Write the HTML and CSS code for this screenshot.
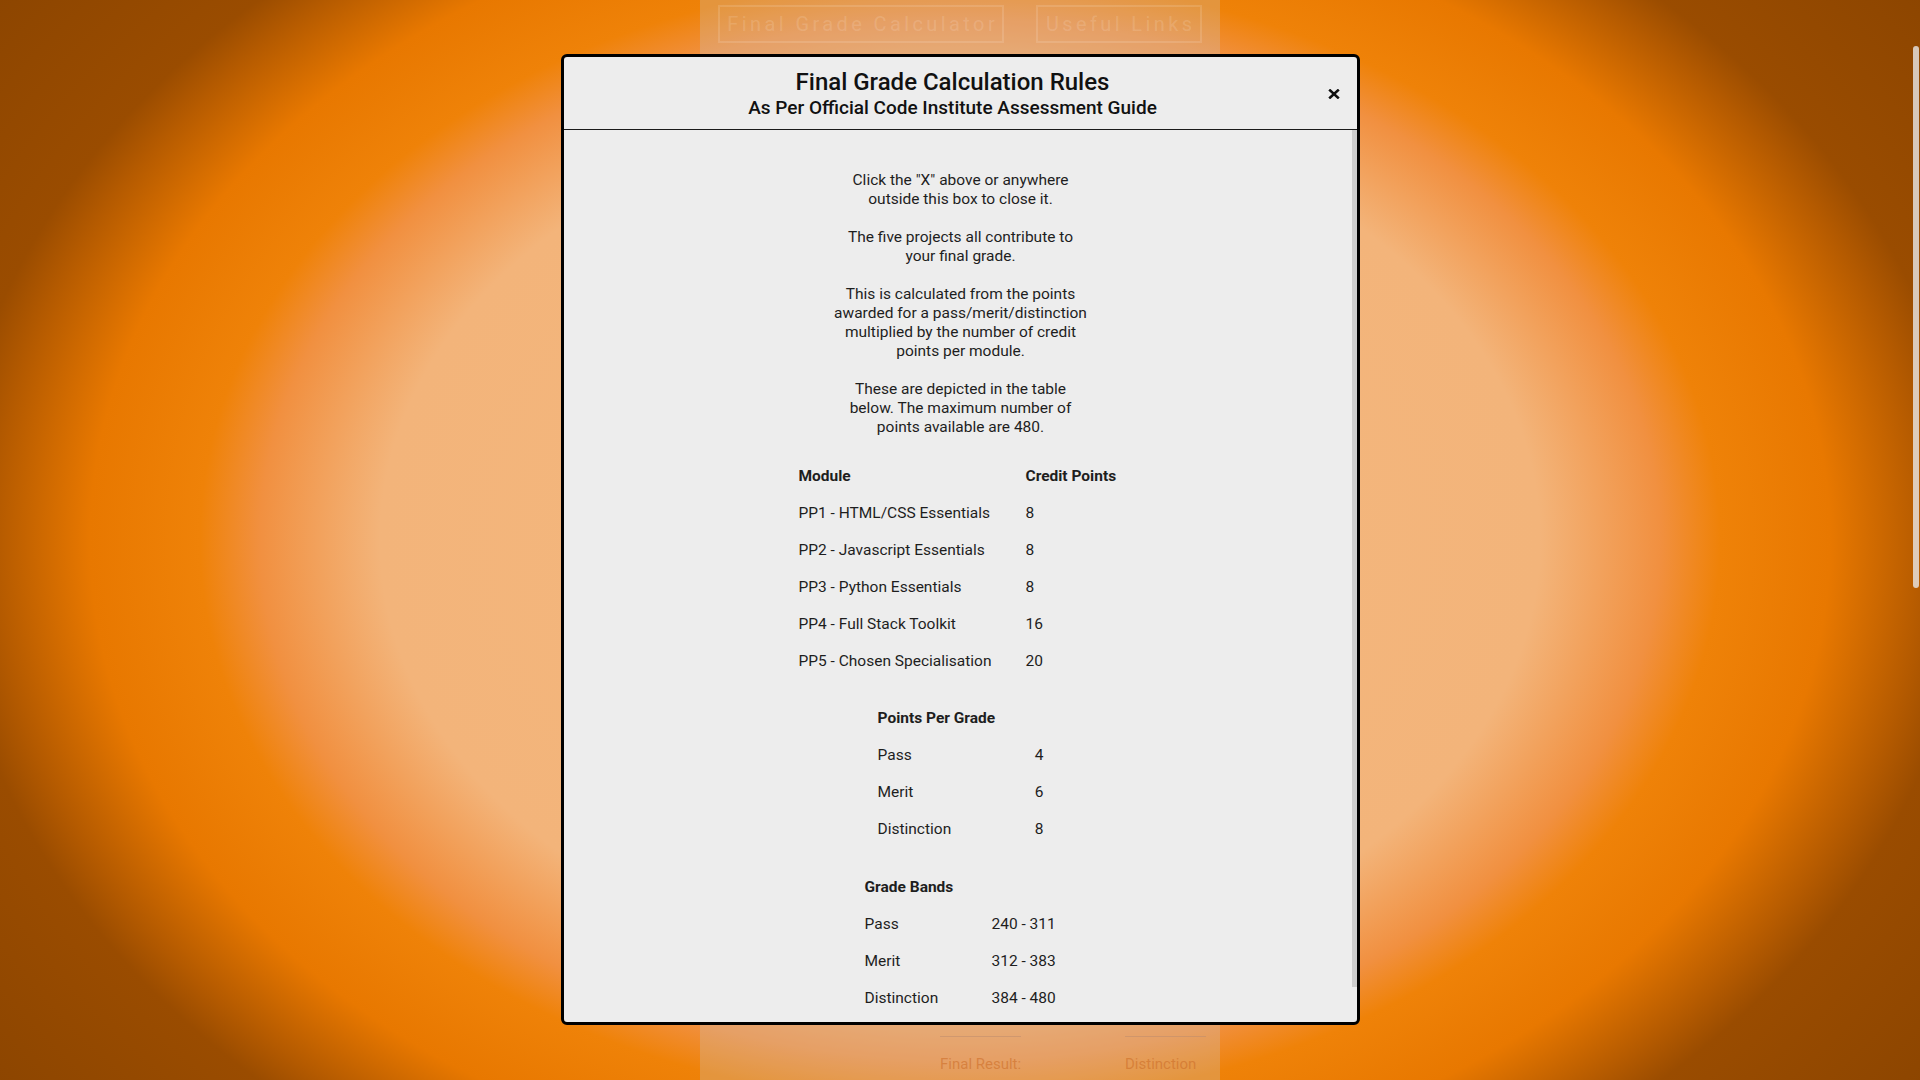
FILE: index.html
```html
<!DOCTYPE html>
<html lang="en">
<head>
<meta charset="utf-8">
<title>Final Grade Calculator</title>
<link rel="stylesheet" href="styles.css">
</head>
<body>
<div class="page">
  <div class="column">
    <nav class="nav">
      <a class="nav-btn nav-btn-wide">Final Grade Calculator</a>
      <a class="nav-btn nav-btn-narrow">Useful Links</a>
    </nav>
    <main class="calc"></main>
    <div class="result">
      <div class="result-cell">Final Result:</div>
      <div class="result-cell">Distinction</div>
    </div>
  </div>
</div>

<div class="modal">
  <header class="modal-header">
    <h1 class="modal-title">Final Grade Calculation Rules</h1>
    <h2 class="modal-subtitle">As Per Official Code Institute Assessment Guide</h2>
    <span class="modal-close" aria-label="close">
      <svg width="12" height="10" viewBox="0 0 12 10"><path d="M1.2 0.6 L10.8 9.4 M10.8 0.6 L1.2 9.4" stroke="#111" stroke-width="2.6" fill="none"/></svg>
    </span>
  </header>
  <div class="modal-body">
    <p>Click the "X" above or anywhere<br>outside this box to close it.</p>
    <p>The five projects all contribute to<br>your final grade.</p>
    <p>This is calculated from the points<br>awarded for a pass/merit/distinction<br>multiplied by the number of credit<br>points per module.</p>
    <p>These are depicted in the table<br>below. The maximum number of<br>points available are 480.</p>

    <table class="rules rules-module">
      <tr><th class="c1">Module</th><th>Credit Points</th></tr>
      <tr><td class="c1">PP1 - HTML/CSS Essentials</td><td>8</td></tr>
      <tr><td class="c1">PP2 - Javascript Essentials</td><td>8</td></tr>
      <tr><td class="c1">PP3 - Python Essentials</td><td>8</td></tr>
      <tr><td class="c1">PP4 - Full Stack Toolkit</td><td>16</td></tr>
      <tr><td class="c1">PP5 - Chosen Specialisation</td><td>20</td></tr>
    </table>

    <table class="rules rules-points">
      <tr><th colspan="2">Points Per Grade</th></tr>
      <tr><td class="c1">Pass</td><td>4</td></tr>
      <tr><td class="c1">Merit</td><td>6</td></tr>
      <tr><td class="c1">Distinction</td><td>8</td></tr>
    </table>

    <table class="rules rules-bands">
      <tr><th colspan="2">Grade Bands</th></tr>
      <tr><td class="c1">Pass</td><td>240 - 311</td></tr>
      <tr><td class="c1">Merit</td><td>312 - 383</td></tr>
      <tr><td class="c1">Distinction</td><td>384 - 480</td></tr>
    </table>
    <div class="modal-end"></div>
  </div>
  <div class="modal-scroll-thumb"></div>
</div>

<div class="page-scrollbar"></div>
</body>
</html>
```

FILE: styles.css
```css
* { box-sizing: border-box; }

html, body {
  margin: 0;
  height: 100%;
  overflow: hidden;
}

body {
  font-family: Roboto, "Noto Sans", Arial, sans-serif;
  color: #1e1e1e;
}

.page {
  height: 100vh;
  display: flex;
  justify-content: center;
  background: radial-gradient(ellipse 1000px 743px at 50% 50%,
    #f4b87f 0%, #f3b47a 58%, #f19040 70%, #ef8208 76%, #e87800 87%,
    #b45a00 96.5%, #9a4c00 101%, #8a4400 125%);
}

.column {
  width: 520px;
  height: 100%;
  display: flex;
  flex-direction: column;
  background: rgba(200, 200, 200, 0.28);
}

.nav {
  display: flex;
  justify-content: center;
  gap: 32px;
  padding-top: 5px;
}

.nav-btn {
  height: 38px;
  border: 2px solid rgba(255, 255, 255, 0.13);
  color: rgba(255, 255, 255, 0.14);
  font-size: 20px;
  letter-spacing: 3.4px;
  display: flex;
  align-items: center;
  justify-content: center;
  padding-left: 3.4px;
  white-space: nowrap;
}

.nav-btn-wide { width: 286px; }
.nav-btn-narrow { width: 166px; }

.calc { flex: 1; }

.result {
  height: 44px;
  display: flex;
  gap: 104px;
  padding-left: 240px;
}

.result-cell {
  width: 81px;
  border-top: 1px solid rgba(190, 140, 110, 0.55);
  padding-top: 18px;
  font-size: 15px;
  line-height: 19px;
  white-space: nowrap;
  color: rgba(205, 110, 40, 0.6);
}

.modal {
  position: fixed;
  top: 54px;
  left: 561px;
  width: 799px;
  height: 971px;
  border: 3px solid #000;
  border-radius: 6px;
  background: #ededed;
  display: flex;
  flex-direction: column;
  overflow: hidden;
}

.modal-header {
  position: relative;
  flex: none;
  text-align: center;
  padding: 12px 16px 10px 0;
  border-bottom: 1px solid #1a1a1a;
}

.modal-title {
  margin: 0;
  font-size: 24px;
  line-height: 26px;
  font-weight: 500;
  color: #111;
}

.modal-subtitle {
  margin: 2px 0 0;
  font-size: 19px;
  line-height: 22px;
  font-weight: 500;
  color: #111;
}

.modal-close {
  position: absolute;
  right: 17px;
  top: 32px;
  width: 12px;
  height: 10px;
  display: flex;
}

.modal-body {
  flex: 1;
  min-height: 0;
  overflow: hidden;
  padding: 41px 0 0;
  text-align: center;
  font-size: 15.5px;
  line-height: 19px;
}

.modal-scroll-thumb {
  position: absolute;
  right: 0;
  top: 73px;
  width: 5px;
  height: 857px;
  background: #cdcdcd;
}

.modal-end { height: 40px; }

.modal-body p {
  margin: 0 0 19px;
}

.rules {
  border-collapse: collapse;
  border-spacing: 0;
  margin: 0 auto;
  text-align: left;
  font-size: 15.5px;
  line-height: 19px;
}

.rules th, .rules td {
  padding: 9px 0;
  white-space: nowrap;
}

.rules th { font-weight: 700; }

.rules-module { width: 324px; margin-top: 20.5px; }
.rules-module .c1 { width: 227px; }

.rules-points { width: 166px; margin-top: 20.5px; }
.rules-points .c1 { width: 157.5px; }

.rules-bands { width: 192px; margin-top: 20.5px; }
.rules-bands .c1 { width: 127px; }

.page-scrollbar {
  position: fixed;
  right: 1px;
  top: 46px;
  width: 6px;
  height: 542px;
  border-radius: 3px;
  background: rgba(232, 232, 232, 0.8);
}
```
